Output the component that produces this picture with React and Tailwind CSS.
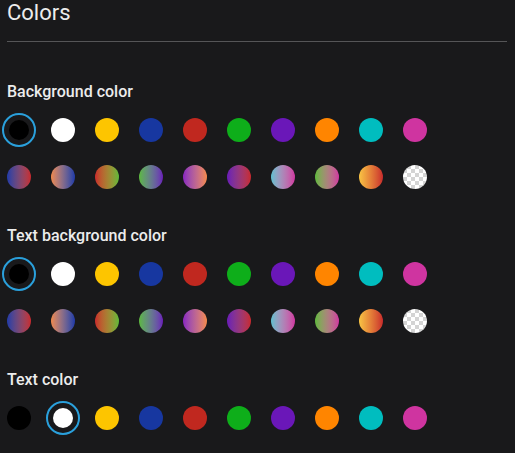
import React from "react";

const solids = [
  "bg-[#000000]",
  "bg-[#ffffff]",
  "bg-[#fdc500]",
  "bg-[#1737a0]",
  "bg-[#c0281f]",
  "bg-[#0eae1a]",
  "bg-[#6a17b8]",
  "bg-[#ff8500]",
  "bg-[#00bdbf]",
  "bg-[#cf34a0]",
];

const gradients = [
  "bg-linear-to-r from-[#1e3aa8] to-[#c8282c]",
  "bg-linear-to-r from-[#f0894a] to-[#2038a8]",
  "bg-linear-to-r from-[#c8282c] to-[#5cb83a]",
  "bg-linear-to-r from-[#5cb83a] to-[#6a17b8]",
  "bg-linear-to-r from-[#8a22c0] to-[#f58a48]",
  "bg-linear-to-r from-[#6a17b8] to-[#c8282c]",
  "bg-linear-to-r from-[#5cc0d0] to-[#cf34a0]",
  "bg-linear-to-r from-[#5cb83a] to-[#cf34a0]",
  "bg-linear-to-r from-[#f8c444] to-[#c8282c]",
  "bg-[conic-gradient(#d4d4d4_25%,#ffffff_0_50%,#d4d4d4_0_75%,#ffffff_0)] bg-[length:8px_8px]",
];

function Swatch({ cls, selected }) {
  return (
    <div className="w-6 h-6 flex items-center justify-center shrink-0">
      {selected ? (
        <div className={`w-5 h-5 rounded-full outline-2 outline-offset-[5px] outline-[#2aa0dc] ${cls}`} />
      ) : (
        <div className={`w-6 h-6 rounded-full ${cls}`} />
      )}
    </div>
  );
}

function Row({ items, selected = -1, className = "" }) {
  return (
    <div className={`flex gap-5 ${className}`}>
      {items.map((c, i) => (
        <Swatch key={i} cls={c} selected={i === selected} />
      ))}
    </div>
  );
}

export default function App() {
  return (
    <div
      className="w-[515px] h-[453px] bg-[#19191b] text-[#ececec] px-[7px] overflow-hidden"
      style={{ fontFamily: "Roboto, 'Liberation Sans', sans-serif" }}
    >
      <div className="text-[22px] leading-[26px]">Colors</div>
      <div className="mt-[15px] h-px bg-[#555557] mr-[1px]" />

      <div className="mt-[40px] text-[16px] leading-5 font-medium">Background color</div>
      <Row items={solids} selected={0} className="mt-[16px]" />
      <Row items={gradients} className="mt-[23px]" />

      <div className="mt-[37px] text-[16px] leading-5 font-medium">Text background color</div>
      <Row items={solids} selected={0} className="mt-[16px]" />
      <Row items={gradients} className="mt-[23px]" />

      <div className="mt-[37px] text-[16px] leading-5 font-medium">Text color</div>
      <Row items={solids} selected={1} className="mt-[16px]" />
    </div>
  );
}
